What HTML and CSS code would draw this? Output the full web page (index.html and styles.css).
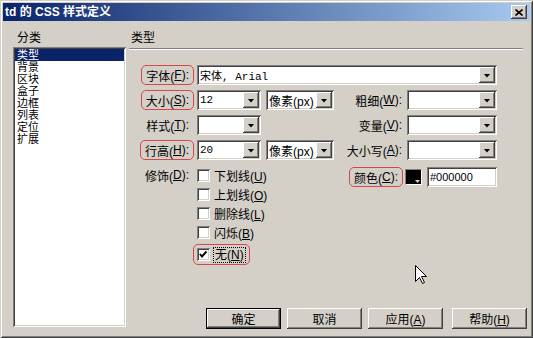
FILE: index.html
```html
<!DOCTYPE html>
<html lang="zh-CN">
<head>
  <meta charset="UTF-8">
  <title>td 的 CSS 样式定义</title>
  <link rel="stylesheet" href="styles.css">
</head>
<body>

  <div class="window">
    <div class="titlebar">
      <span class="title">td 的 CSS 样式定义</span>
      <span class="close-btn">
        <svg width="8" height="7" viewBox="0 0 8 7"><path d="M0.5 0.5 L7.5 6.5 M7.5 0.5 L0.5 6.5" stroke="#000" stroke-width="1.6"/></svg>
      </span>
    </div>

    <div class="content">
      <!-- 分类列表 -->
      <div class="side">
        <div class="caption">分类</div>
        <ul class="category-list">
          <li class="selected">类型</li>
          <li>背景</li>
          <li>区块</li>
          <li>盒子</li>
          <li>边框</li>
          <li>列表</li>
          <li>定位</li>
          <li>扩展</li>
        </ul>
      </div>

      <!-- 类型面板 -->
      <div class="main">
        <div class="caption caption-main">类型</div>
        <div class="rule"></div>

        <div class="form">
          <div class="lbl"><span class="mark boxed">字体(<u>F</u>):</span></div>
          <div class="combo span-all"><span class="val mono">宋体, Arial</span><span class="drop"></span></div>

          <div class="lbl"><span class="mark boxed">大小(<u>S</u>):</span></div>
          <div class="combo short"><span class="val mono">12</span><span class="drop"></span></div>
          <div class="combo unit"><span class="val">像素(px)</span><span class="drop"></span></div>
          <div class="lbl lbl-right"><span class="mark">粗细(<u>W</u>):</span></div>
          <div class="combo"><span class="val"></span><span class="drop"></span></div>

          <div class="lbl"><span class="mark">样式(<u>T</u>):</span></div>
          <div class="combo short"><span class="val"></span><span class="drop"></span></div>
          <div></div>
          <div class="lbl lbl-right"><span class="mark">变量(<u>V</u>):</span></div>
          <div class="combo"><span class="val"></span><span class="drop"></span></div>

          <div class="lbl"><span class="mark boxed">行高(<u>H</u>):</span></div>
          <div class="combo short"><span class="val mono">20</span><span class="drop"></span></div>
          <div class="combo unit"><span class="val">像素(px)</span><span class="drop"></span></div>
          <div class="lbl lbl-right"><span class="mark">大小写(<u>A</u>):</span></div>
          <div class="combo"><span class="val"></span><span class="drop"></span></div>

          <div class="lbl lbl-top"><span class="mark">修饰(<u>D</u>):</span></div>
          <div class="checks">
            <label class="check-item"><span class="checkbox"></span><span>下划线(<u>U</u>)</span></label>
            <label class="check-item"><span class="checkbox"></span><span>上划线(<u>O</u>)</span></label>
            <label class="check-item"><span class="checkbox"></span><span>删除线(<u>L</u>)</span></label>
            <label class="check-item"><span class="checkbox"></span><span>闪烁(<u>B</u>)</span></label>
            <label class="check-item boxed-item">
              <span class="checkbox">
                <svg width="13" height="13" viewBox="0 0 13 13"><polyline points="3,6 5,8.5 9.5,3.5" fill="none" stroke="#000" stroke-width="1.9"/></svg>
              </span>
              <span class="focus">无(<u>N</u>)</span>
            </label>
          </div>
          <div class="color-area">
            <span class="mark boxed">颜色(<u>C</u>):</span>
            <span class="swatch"></span>
            <span class="text-input">#000000</span>
          </div>
        </div>

        <div class="buttons">
          <button class="btn btn-default">确定</button>
          <button class="btn">取消</button>
          <button class="btn">应用(<u>A</u>)</button>
          <button class="btn btn-help">帮助(<u>H</u>)</button>
        </div>
      </div>
    </div>

    <svg class="cursor" width="13" height="20" viewBox="0 0 13 20">
      <path d="M0.5 0.5 L0.5 16.5 L4.5 12.5 L7.5 18.5 L9.5 17.5 L6.5 11.5 L11.5 11.5 Z" fill="#fff" stroke="#000" stroke-width="1"/>
    </svg>
  </div>

</body>
</html>
```

FILE: styles.css
```css
body {
  margin: 0;
  font-family: "Liberation Sans", "Noto Sans CJK SC", sans-serif;
  font-size: 12px;
  color: #000;
  background: #d4d0c8;
}

u {
  text-decoration: underline;
}

.window {
  position: relative;
  width: 533px;
  height: 338px;
  box-sizing: border-box;
  padding: 3px;
  display: flex;
  flex-direction: column;
  background: #d4d0c8;
  box-shadow: inset 1px 1px #d4d0c8, inset -1px -1px #404040, inset 2px 2px #fff, inset -2px -2px #808080;
}

/* 标题栏 */
.titlebar {
  height: 18px;
  display: flex;
  align-items: center;
  justify-content: space-between;
  background: linear-gradient(to right, #0a246a, #a6caf0);
}

.title {
  padding-left: 2px;
  color: #fff;
  font-weight: bold;
  font-size: 12px;
  line-height: 18px;
}

.close-btn {
  width: 16px;
  height: 14px;
  margin-right: 3px;
  display: flex;
  align-items: center;
  justify-content: center;
  background: #d4d0c8;
  box-shadow: inset -1px -1px #404040, inset 1px 1px #fff, inset -2px -2px #808080;
}

.content {
  flex: 1;
  display: flex;
}

.caption {
  margin-top: 10px;
  line-height: 14px;
  height: 14px;
  padding-left: 4px;
}

/* 左侧分类 */
.side {
  width: 113px;
  margin-left: 10px;
  padding-bottom: 8px;
  display: flex;
  flex-direction: column;
}

.category-list {
  flex: 1;
  margin: 2px 0 0 0;
  padding: 2px;
  list-style: none;
  background: #fff;
  box-shadow: inset 1px 1px #808080, inset -1px -1px #fff, inset 2px 2px #404040, inset -2px -2px #d4d0c8;
}

.category-list li {
  height: 12px;
  line-height: 12px;
  font-size: 11px;
  padding-left: 2px;
}

.category-list li.selected {
  background: #0a246a;
  color: #fff;
}

/* 右侧面板 */
.main {
  flex: 1;
  margin-left: 3px;
  padding-bottom: 6px;
  display: flex;
  flex-direction: column;
}

.caption-main {
  padding-left: 2px;
}

.rule {
  height: 0;
  margin: 3px 7px 0 0;
  border-top: 1px solid #808080;
  border-bottom: 1px solid #fff;
}

.form {
  margin-top: 15px;
  display: grid;
  grid-template-columns: 68px 69px 68px 73px 90px;
  grid-template-rows: 20px 20px 20px 20px auto;
  row-gap: 5px;
}

.lbl {
  display: flex;
  align-items: center;
  justify-content: flex-end;
  padding-right: 3px;
}

.lbl-right {
  padding-right: 0;
}

.lbl-top {
  height: 20px;
  align-self: start;
}

.mark {
  height: 20px;
  box-sizing: border-box;
  display: inline-flex;
  align-items: center;
  padding: 0 4px;
  border: 1px solid transparent;
  border-radius: 5px;
  white-space: nowrap;
}

.boxed {
  border-color: #d8464a;
}

/* 下拉框 */
.combo {
  height: 20px;
  box-sizing: border-box;
  padding: 2px;
  display: flex;
  align-items: center;
  background: #fff;
  box-shadow: inset 1px 1px #808080, inset -1px -1px #fff, inset 2px 2px #404040, inset -2px -2px #d4d0c8;
}

.span-all {
  grid-column: 2 / 6;
}

.short {
  width: 64px;
}

.unit {
  width: 68px;
}

.val {
  flex: 1;
  padding-left: 1px;
  white-space: nowrap;
  overflow: hidden;
}

.mono {
  font-family: "Liberation Mono", "Noto Sans CJK SC", monospace;
  font-size: 11px;
}

.drop {
  width: 16px;
  height: 16px;
  display: flex;
  align-items: center;
  justify-content: center;
  background: #d4d0c8;
  box-shadow: inset -1px -1px #404040, inset 1px 1px #fff, inset -2px -2px #808080;
}

.drop::after {
  content: "";
  width: 7px;
  height: 4px;
  margin-top: 1px;
  background: #000;
  clip-path: polygon(0 0, 100% 0, 50% 100%);
}

/* 复选框 */
.checks {
  grid-column: 2 / 4;
  padding-top: 1px;
  display: flex;
  flex-direction: column;
}

.check-item {
  height: 19px;
  display: flex;
  align-items: center;
  gap: 4px;
}

.checkbox {
  width: 13px;
  height: 13px;
  flex: none;
  display: block;
  background: #fff;
  box-shadow: inset 1px 1px #808080, inset -1px -1px #fff, inset 2px 2px #404040, inset -2px -2px #d4d0c8;
}

.checkbox svg {
  display: block;
}

.boxed-item {
  align-self: flex-start;
  margin: 2px 0 0 -4px;
  padding: 0 4px 0 3px;
  height: 19px;
  border: 1px solid #d8464a;
  border-radius: 5px;
}

.focus {
  padding: 0 1px;
  outline: 1px dotted #000;
  line-height: 14px;
}

/* 颜色 */
.color-area {
  grid-column: 4 / 6;
  align-self: start;
  margin-top: 2px;
  height: 20px;
  display: flex;
  align-items: center;
  justify-content: flex-end;
}

.swatch {
  position: relative;
  width: 17px;
  height: 16px;
  margin-left: 2px;
  box-sizing: border-box;
  border: 1px solid #808080;
  border-right-color: #fff;
  border-bottom-color: #fff;
  background: #000;
}

.swatch::after {
  content: "";
  position: absolute;
  right: 1px;
  bottom: 1px;
  width: 5px;
  height: 3px;
  background: #d4d0c8;
  clip-path: polygon(0 0, 100% 0, 50% 100%);
}

.text-input {
  width: 70px;
  height: 20px;
  margin-left: 5px;
  box-sizing: border-box;
  padding: 0 3px;
  display: flex;
  align-items: center;
  font-size: 11px;
  background: #fff;
  box-shadow: inset 1px 1px #808080, inset -1px -1px #fff, inset 2px 2px #404040, inset -2px -2px #d4d0c8;
}

/* 按钮 */
.buttons {
  margin-top: auto;
  padding-right: 3px;
  display: flex;
  justify-content: flex-end;
  gap: 6px;
}

.btn {
  width: 75px;
  height: 21px;
  padding: 0;
  border: none;
  font-family: "Liberation Sans", "Noto Sans CJK SC", sans-serif;
  font-size: 12px;
  color: #000;
  background: #d4d0c8;
  box-shadow: inset -1px -1px #404040, inset 1px 1px #fff, inset -2px -2px #808080, inset 2px 2px #d4d0c8;
}

.btn-default {
  border: 1px solid #000;
}

.btn-help {
  margin-left: 3px;
}

/* 鼠标指针 */
.cursor {
  position: absolute;
  left: 415px;
  top: 265px;
}
```
